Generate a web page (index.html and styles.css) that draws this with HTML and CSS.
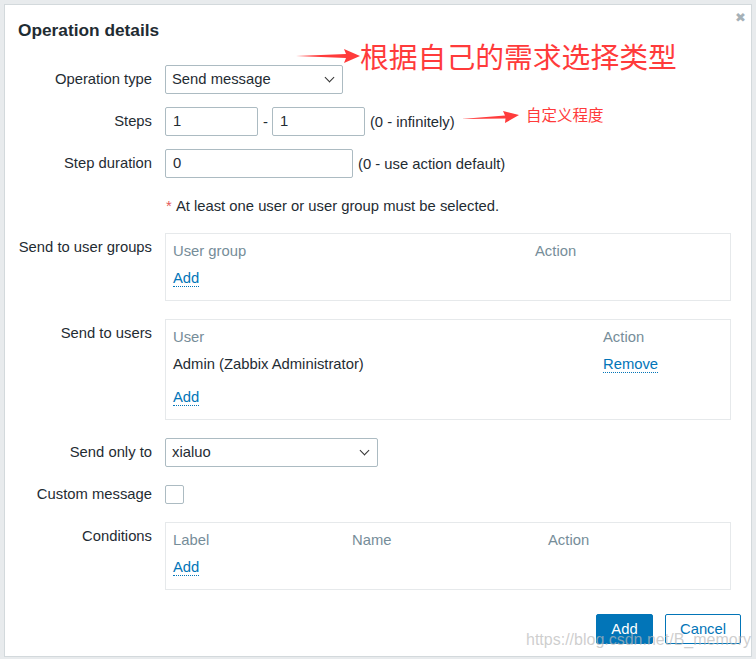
FILE: index.html
```html
<!DOCTYPE html>
<html lang="en">
<head>
    <meta charset="UTF-8">
    <title>Operation details</title>
    <link rel="stylesheet" href="styles.css">
</head>
<body>
    <div class="dialog">
        <div class="dialog-head">
            <h4>Operation details</h4>
            <span class="close-btn">&#x2716;</span>
        </div>

        <div class="form-grid">
            <label>Operation type</label>
            <div class="field">
                <div class="select select-op">Send message<span class="chevron"></span></div>
            </div>

            <label>Steps</label>
            <div class="field">
                <div class="input input-step">1</div>
                <span class="dash">-</span>
                <div class="input input-step2">1</div>
                <span class="hint">(0 - infinitely)</span>
            </div>

            <label>Step duration</label>
            <div class="field">
                <div class="input input-duration">0</div>
                <span class="hint">(0 - use action default)</span>
            </div>

            <label></label>
            <div class="field">
                <span class="required">*</span>&nbsp;At least one user or user group must be selected.
            </div>

            <label>Send to user groups</label>
            <div class="table-box cols-groups">
                <div class="th">User group</div>
                <div class="th">Action</div>
                <div class="add-row"><a href="#" class="link">Add</a></div>
            </div>

            <label>Send to users</label>
            <div class="table-box cols-users">
                <div class="th">User</div>
                <div class="th">Action</div>
                <div class="td">Admin (Zabbix Administrator)</div>
                <div class="td"><a href="#" class="link">Remove</a></div>
                <div class="add-row"><a href="#" class="link">Add</a></div>
            </div>

            <label>Send only to</label>
            <div class="field">
                <div class="select select-media">xialuo<span class="chevron"></span></div>
            </div>

            <label>Custom message</label>
            <div class="field">
                <span class="checkbox"></span>
            </div>

            <label>Conditions</label>
            <div class="table-box cols-conditions">
                <div class="th">Label</div>
                <div class="th">Name</div>
                <div class="th">Action</div>
                <div class="add-row"><a href="#" class="link">Add</a></div>
            </div>
        </div>

        <div class="dialog-foot">
            <button class="btn btn-primary">Add</button>
            <button class="btn btn-alt">Cancel</button>
        </div>

        <!-- 标注 -->
        <div class="note note-type">
            <svg width="64" height="14" viewBox="0 0 64 14"><polygon points="0,7 50,5 48,0 64,7 48,14 50,9" fill="#ff3b3b"/></svg>
            <span>根据自己的需求选择类型</span>
        </div>
        <div class="note note-steps">
            <svg width="58" height="14" viewBox="0 0 58 14"><polygon points="0,9 44,5.5 42,1 58,5 44,13 44.5,8.5" fill="#ff3b3b"/></svg>
            <span>自定义程度</span>
        </div>

        <div class="watermark">https://blog.csdn.net/B_memory</div>
    </div>
</body>
</html>
```

FILE: styles.css
```css
* {
    margin: 0;
    padding: 0;
    box-sizing: border-box;
}

body {
    font-family: 'Liberation Sans', Arial, sans-serif;
    font-size: 14.8px;
    color: #1f2c33;
    background: #e8ebed;
    overflow: hidden;
}

.dialog {
    position: relative;
    width: 748px;
    height: 653px;
    margin: 4px 0 0 4px;
    background: #fff;
    border: 1px solid #d3d9dc;
    padding: 0 20px 0 0;
}

.dialog-head {
    height: 60px;
    padding: 15px 0 0 13px;
}

.dialog-head h4 {
    font-size: 17.3px;
    font-weight: bold;
    line-height: 20px;
    color: #1f2c33;
}

.close-btn {
    position: absolute;
    top: 5px;
    right: 5px;
    font-size: 13px;
    color: #a6b1b7;
}

/* 表单 */
.form-grid {
    display: grid;
    grid-template-columns: 147px 1fr;
    column-gap: 13px;
    row-gap: 13px;
}

.form-grid label {
    text-align: right;
    line-height: 29px;
    white-space: nowrap;
}

.field {
    display: flex;
    align-items: center;
    height: 29px;
    white-space: nowrap;
}

.input,
.select {
    height: 29px;
    line-height: 27px;
    border: 1px solid #acbbc2;
    border-radius: 2px;
    padding: 0 7px;
    color: #1f2c33;
}

.select {
    position: relative;
    padding-left: 6px;
}

.select-op { width: 178px; }
.select-media { width: 213px; }
.input-step { width: 93px; }
.input-step2 { width: 93px; }
.input-duration { width: 188px; }

.chevron {
    position: absolute;
    right: 9px;
    top: 8px;
    width: 7px;
    height: 7px;
    border-right: 1.5px solid #333;
    border-bottom: 1.5px solid #333;
    transform: rotate(45deg);
}

.dash {
    margin: 0 4px 0 5px;
}

.hint {
    margin-left: 5px;
}

.required {
    color: #e45959;
    margin-left: 1px;
}

.checkbox {
    width: 19px;
    height: 19px;
    border: 1px solid #acbbc2;
    border-radius: 2px;
}

/* 表格框 */
.table-box {
    display: grid;
    border: 1px solid #e6e9eb;
    padding: 4px 7px 8px;
    margin-bottom: 5px;
}

.cols-groups { grid-template-columns: 362px 1fr; }
.cols-users { grid-template-columns: 430px 1fr; }
.cols-conditions { grid-template-columns: 179px 196px 1fr; }

.th {
    height: 26px;
    line-height: 26px;
    color: #768d99;
}

.td {
    height: 28px;
    line-height: 28px;
    margin-bottom: 5px;
}

.add-row {
    grid-column: 1 / -1;
    height: 28px;
    line-height: 28px;
}

.link {
    color: #0275b8;
    text-decoration: none;
    border-bottom: 1px dotted #0275b8;
}

/* 底部按钮 */
.dialog-foot {
    display: flex;
    justify-content: flex-end;
    gap: 12px;
    padding: 19px 10px 0 0;
    margin-right: -20px;
}

.btn {
    height: 30px;
    font-family: inherit;
    font-size: 14.8px;
    border-radius: 2px;
    border: 1px solid #0275b8;
    padding: 0 10px;
}

.btn-primary {
    width: 57px;
    background: #0275b8;
    color: #fff;
}

.btn-alt {
    width: 76px;
    background: #fff;
    color: #0275b8;
}

/* 标注 */
.note {
    position: absolute;
    display: flex;
    align-items: center;
    color: #ff3b3b;
    font-family: 'Noto Sans CJK SC', sans-serif;
    white-space: nowrap;
}

.note-type {
    left: 291px;
    top: 30px;
    font-size: 28.8px;
}

.note-steps {
    left: 456px;
    top: 98px;
    font-size: 15.5px;
}

.note-steps svg {
    margin-top: 6px;
    margin-right: 7px;
}

.watermark {
    position: absolute;
    left: 521px;
    top: 626px;
    font-size: 16px;
    color: rgba(185, 185, 185, 0.7);
    white-space: nowrap;
}
```
